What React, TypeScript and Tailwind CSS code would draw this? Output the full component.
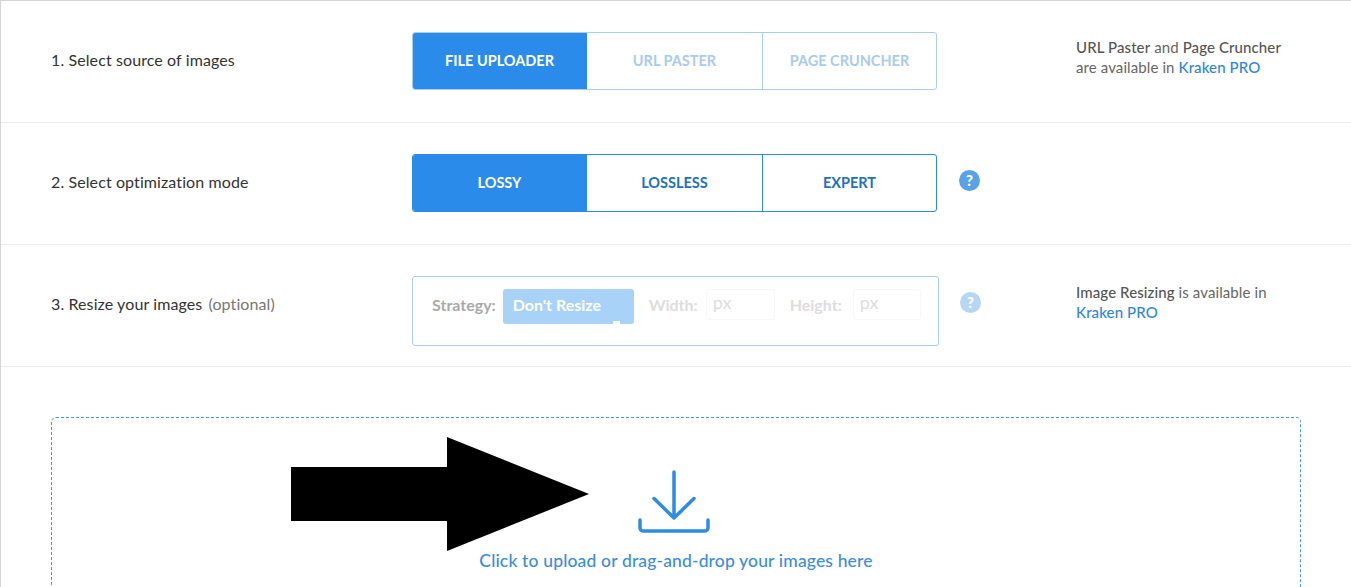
const font = "font-['Lato','Noto_Sans',sans-serif]";

function Segment({ labels, tone }: { labels: string[]; tone: "faded" | "solid" }) {
  const border = tone === "faded" ? "border-[#a9cdee]" : "border-[#2a8bea]";
  const text = tone === "faded" ? "text-[#a9cbec]" : "text-[#2171bd]";
  return (
    <div className={`flex h-[58px] w-[525px] overflow-hidden rounded-[3px] border ${border}`}>
      {labels.map((label, idx) => (
        <div
          key={label}
          className={`flex items-center justify-center text-[14.5px] font-bold ${
            idx === 0 ? "-my-px -ml-px w-[175px] shrink-0 bg-[#2a8bea] text-white" : text
          } ${idx === 1 ? "w-[175px] shrink-0" : ""} ${idx === 2 ? `flex-1 border-l ${border}` : ""}`}
        >
          {label}
        </div>
      ))}
    </div>
  );
}

function Help({ faded }: { faded?: boolean }) {
  return (
    <div
      className={`flex h-[21px] w-[21px] items-center justify-center rounded-full text-[15px] font-black text-white ${
        faded ? "bg-[#b5d7f5]" : "bg-[#5aa2e8]"
      }`}
    >
      ?
    </div>
  );
}

function Row({ label, control, note }: { label: React.ReactNode; control: React.ReactNode; note?: React.ReactNode }) {
  return (
    <div className="flex h-[122px] items-center border-b border-[#ececec] pb-[2px] pl-[50px]">
      <div className="-mt-[2px] w-[361px] text-[16px] tracking-[0.1px] text-[#333]">{label}</div>
      <div className="w-[664px]">{control}</div>
      <div className="text-[15px] leading-[20px] tracking-[0.1px] text-[#666]">{note}</div>
    </div>
  );
}

export default function App() {
  return (
    <div className={`relative h-[587px] w-[1351px] overflow-hidden border-l border-t border-[#d5d5d5] bg-white ${font}`}>
      <Row
        label="1. Select source of images"
        control={<Segment tone="faded" labels={["FILE UPLOADER", "URL PASTER", "PAGE CRUNCHER"]} />}
        note={
          <div className="-mt-[8px]">
            <span className="font-medium text-[#555]">URL Paster</span> and <span className="font-medium text-[#555]">Page Cruncher</span>
            <br />
            are available in <span className="font-medium text-[#2e86de]">Kraken PRO</span>
          </div>
        }
      />
      <Row
        label="2. Select optimization mode"
        control={
          <div className="flex items-center gap-[22px]">
            <Segment tone="solid" labels={["LOSSY", "LOSSLESS", "EXPERT"]} />
            <div className="-mt-1">
              <Help />
            </div>
          </div>
        }
      />
      <Row
        label={
          <>
            3. Resize your images <span className="ml-[2px] text-[#777]">(optional)</span>
          </>
        }
        control={
          <div className="flex items-center gap-[21px] pt-[12px]">
            <div className="flex h-[70px] w-[527px] items-start rounded-[3px] border border-[#a9cdee] pl-[19px] pt-[12px] text-[16px] font-bold">
              <span className="mt-[4px] text-[#aaa]">Strategy:</span>
              <div className="relative ml-[7px] h-[35px] w-[131px] rounded-[3px] bg-[#a8d2f8] pl-[10px] pt-[4px] text-white">
                Don't Resize
                <div className="absolute bottom-0 left-[110px] h-[3px] w-[7px] bg-white" />
              </div>
              <span className="ml-[15px] mt-[4px] text-[#ddd]">Width:</span>
              <div className="ml-[8px] h-[31px] w-[69px] rounded-[3px] border border-[#f7f7f7] pl-[6px] text-[18px] leading-[24px] font-normal text-[#ddd]">px</div>
              <span className="ml-[15px] mt-[4px] text-[#ddd]">Height:</span>
              <div className="ml-[11px] h-[31px] w-[68px] rounded-[3px] border border-[#f7f7f7] pl-[6px] text-[18px] leading-[24px] font-normal text-[#ddd]">px</div>
            </div>
            <div className="-mt-[16px]">
              <Help faded />
            </div>
          </div>
        }
        note={
          <div className="-mt-[5px]">
            <span className="font-medium text-[#555]">Image Resizing</span> is available in
            <br />
            <span className="font-medium text-[#2e86de]">Kraken PRO</span>
          </div>
        }
      />
      <div className="mx-[50px] mt-[50px] flex h-[300px] flex-col items-center rounded-[5px] border border-dashed border-[#4a9bd4] pt-[52px]">
        <svg className="mr-[4px]" width="72" height="64" viewBox="0 0 72 64" fill="none" stroke="#2e8be6" strokeWidth="3.5" strokeLinecap="round" strokeLinejoin="round">
          <path d="M36 2V47M16 28.5L36 48L56 28.5" />
          <path d="M2 50V58a3 3 0 0 0 3 3H67a3 3 0 0 0 3-3V50" />
        </svg>
        <div className="mt-[14px] text-[17.5px] font-medium tracking-[0.15px] text-[#3b8ddd]">Click to upload or drag-and-drop your images here</div>
      </div>
      <svg className="absolute left-[290px] top-[436px]" width="298" height="114" viewBox="0 0 298 114">
        <path d="M0 30H156V0L298 57L156 114V84H0Z" fill="#000" />
      </svg>
    </div>
  );
}
